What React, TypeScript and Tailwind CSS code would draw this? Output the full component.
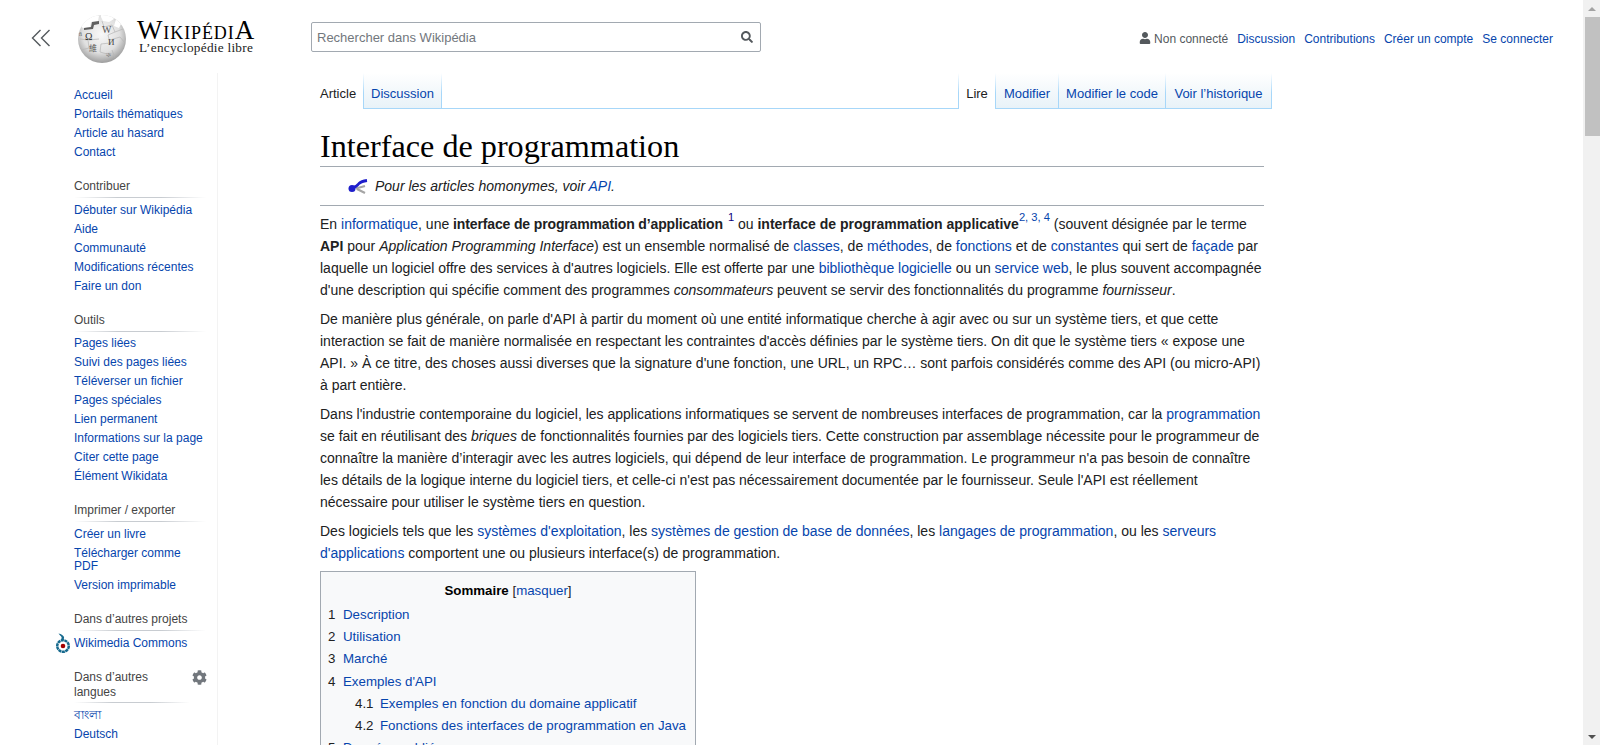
import React from "react";
import { FaCog, FaSearch, FaUser } from "react-icons/fa";

const A = ({ children }: { children: React.ReactNode }) => (
  <a className="text-[#0645ad]">{children}</a>
);

function Globe() {
  return (
    <svg width="52" height="50" viewBox="0 0 52 50" className="block">
      <defs>
        <radialGradient id="g" cx="48%" cy="40%" r="62%">
          <stop offset="0%" stopColor="#f8f8f8" />
          <stop offset="62%" stopColor="#e0e0e0" />
          <stop offset="100%" stopColor="#979797" />
        </radialGradient>
        <clipPath id="c"><circle cx="26" cy="26" r="24" /></clipPath>
      </defs>
      <circle cx="26" cy="26" r="24" fill="url(#g)" />
      <g clipPath="url(#c)">
        <path d="M10 3l8-3 5 3-1 5-7 1-1 5-7 1-3-2z" fill="#fff" />
        <path d="M25 0l9 1 4 5-5 3-6-1-2-4zM40 6l5 5-2 4-5-2z" fill="#fff" />
        <path d="M8 15l7-1 1-5 7-1 0 3-5 1-1 4-9 1z" fill="#5f5f5f" />
        <path d="M26 8l2 6 8-2 3 7-7 3 2 8-9 1-1 8 7 2M4 26l8 1 1 8-8 2M13 27l10-1M34 27l10-3 5 6M36 37l3 8M39 19l8-3" fill="none" stroke="#b4b4b4" strokeWidth="0.7" />
      </g>
      <text x="9" y="27" fontSize="10" fill="#333" fontFamily="Liberation Serif, serif">Ω</text>
      <text x="26" y="20" fontSize="10" fill="#555" fontFamily="Liberation Serif, serif">W</text>
      <text x="32" y="32" fontSize="9" fill="#444" fontFamily="Liberation Serif, serif">И</text>
      <text x="13" y="38" fontSize="8" fill="#555" fontFamily="Noto Sans CJK SC, sans-serif">維</text>
      <text x="3" y="23" fontSize="6" fill="#666" fontFamily="Liberation Serif, serif">ñ</text>
      <text x="30" y="44" fontSize="7" fill="#777" fontFamily="Liberation Serif, serif">ক</text>
    </svg>
  );
}

function Logo() {
  return (
    <div className="flex items-start">
      <div className="ml-[76px] mt-[13px]"><Globe /></div>
      <div className="ml-[8px] mt-[16px] w-[120px] font-['Liberation_Serif',serif] text-black text-center">
        <div className="h-[24px] leading-[28px] whitespace-nowrap text-[18px] tracking-[0.9px]">
          <span className="text-[27px]">W</span>IKIPÉDI<span className="text-[27px]">A</span>
        </div>
        <div className="text-[13.3px] leading-[16px] tracking-[0.25px] whitespace-nowrap text-[#222]">L’encyclopédie libre</div>
      </div>
    </div>
  );
}

const divider = "h-px bg-[linear-gradient(to_right,rgba(200,204,209,0),#c8ccd1_33%,#c8ccd1_66%,rgba(200,204,209,0))]";
const item = "text-[12px] leading-[15px] py-[2px] text-[#0645ad]";

function Section({ title, items, className, listClass = "pt-[3px]" }: { title?: React.ReactNode; items: React.ReactNode[]; className: string; listClass?: string }) {
  return (
    <div className={className}>
      {title && (
        <>
          <div className="text-[12px] leading-[15px] pt-[1px] pb-[3px] text-[#444]">{title}</div>
          <div className={divider + " w-[132px]"} />
        </>
      )}
      <ul className={title ? listClass : ""}>
        {items.map((t, i) => (
          <li key={i} className={item}>{t}</li>
        ))}
      </ul>
    </div>
  );
}

function Commons() {
  return (
    <svg width="16" height="22" viewBox="0 0 16 22" className="absolute left-[-19px] top-[-4px]">
      <circle cx="8" cy="14" r="5.800" fill="none" stroke="#176a8e" strokeWidth="2.500" strokeDasharray="3 0.5" />
      <path d="M3.500 1.500c3 .5 5 2 5.500 3.500.4 1.300-.6 2.500-.6 3.500L6 8.500C6 7 7 6 6.500 5 6 4 4.500 3 3.500 1.500z" fill="#176a8e" />
      <circle cx="8" cy="14" r="2.300" fill="#a40000" />
    </svg>
  );
}

function Sidebar() {
  return (
    <nav className="w-[218px] shrink-0 h-[672px] pl-[74px] border-r border-[#f3f3f3] overflow-hidden">
      <Section className="mt-[13px]" items={["Accueil", "Portails thématiques", "Article au hasard", "Contact"]} />
      <Section className="mt-[16px]" title="Contribuer" items={["Débuter sur Wikipédia", "Aide", "Communauté", "Modifications récentes", "Faire un don"]} />
      <Section className="mt-[16px]" title="Outils" listClass="pt-[2px]" items={["Pages liées", "Suivi des pages liées", "Téléverser un fichier", "Pages spéciales", "Lien permanent", "Informations sur la page", "Citer cette page", "Élément Wikidata"]} />
      <Section className="mt-[16px]" title="Imprimer / exporter" items={["Créer un livre", <span key="t" className="block w-[120px] leading-[13px] pt-[1px] pb-[1px]">Télécharger comme PDF</span>, "Version imprimable"]} />
      <Section className="mt-[16px]" title="Dans d’autres projets" items={[<span key="c" className="relative block"><Commons />Wikimedia Commons</span>]} />
      <div className="mt-[17px] relative">
        <div className="text-[12px] leading-[14.5px] w-[95px] pb-[3px] text-[#444]">Dans d’autres langues</div>
        <FaCog className="absolute left-[118px] top-[0px] text-[15px] text-[#72777d]" />
        <div className={divider + " w-[116px]"} />
        <ul className="pt-[2px]">
          <li className={item + " pb-[3px] font-['Noto_Sans','DejaVu_Sans',sans-serif]"}>বাংলা</li>
          <li className={item}>Deutsch</li>
        </ul>
      </div>
    </nav>
  );
}

const tabBg = "bg-[linear-gradient(to_top,#e8f2f8,#ffffff)]";
const sep = "w-px h-[36px] shrink-0 bg-[linear-gradient(to_bottom,#ffffff,#a7d7f9_55%,#a7d7f9)]";

function Tab({ label, width, selected }: { label: string; width: string; selected?: boolean }) {
  return (
    <>
      <div
        className={
          "h-[36px] pt-[6px] flex items-center justify-center text-[13px] whitespace-nowrap " + width + " " +
          (selected ? "bg-white text-[#202122]" : "text-[#0645ad] border-b border-[#a7d7f9] " + tabBg)
        }
      >
        {label}
      </div>
      <div className={sep} />
    </>
  );
}

function Tabs() {
  return (
    <div className="flex h-[36px] w-[952px]">
      <div className="h-[36px] pt-[6px] flex items-center text-[13px] text-[#202122] w-[43px] whitespace-nowrap">Article</div>
      <div className={sep} />
      <Tab label="Discussion" width="w-[77px]" />
      <div className="flex-1 border-b border-[#a7d7f9]" />
      <div className={sep} />
      <Tab label="Lire" width="w-[36px]" selected />
      <Tab label="Modifier" width="w-[62px]" />
      <Tab label="Modifier le code" width="w-[106px]" />
      <Tab label="Voir l’historique" width="w-[105px]" />
    </div>
  );
}

function Disambig() {
  return (
    <svg width="20" height="15" viewBox="0 0 20 15" className="block">
      <path d="M8 9.500L17 7M9 10L17 14" stroke="#a5a5a5" strokeWidth="2.200" fill="none" />
      <path d="M4 9C7 8.500 9 7 11 4.500 13 2.500 15 2 19 1.500" stroke="#1e1ecb" strokeWidth="2.800" fill="none" />
      <circle cx="4" cy="9.500" r="3.500" fill="#1e1ecb" />
    </svg>
  );
}

const P = ({ children, className = "" }: { children: React.ReactNode; className?: string }) => (
  <p className={"whitespace-nowrap text-[14px] leading-[22px] " + className}>{children}</p>
);

const Sup = ({ children, className = "" }: { children: React.ReactNode; className?: string }) => (
  <sup className={"text-[11.2px] leading-none top-0 align-[8px] " + className}>{children}</sup>
);

function Toc() {
  const row = "text-[13.3px] leading-[22.2px] whitespace-nowrap";
  return (
    <div className="mt-[7px] w-[376px] border border-[#a2a9b1] bg-[#f8f9fa] pt-[9px] px-[7px]">
      <div className="text-center text-[13.3px] leading-[20px] mb-[3px]">
        <b className="font-bold text-black">Sommaire</b> <span>[</span><A>masquer</A><span>]</span>
      </div>
      {[["1", "Description"], ["2", "Utilisation"], ["3", "Marché"], ["4", "Exemples d'API"]].map(([n, t]) => (
        <div key={n} className={row}>
          <span className="inline-block w-[15px] text-[#202122]">{n}</span><A>{t}</A>
        </div>
      ))}
      {[["4.1", "Exemples en fonction du domaine applicatif"], ["4.2", "Fonctions des interfaces de programmation en Java"]].map(([n, t]) => (
        <div key={n} className={row + " pl-[27px]"}>
          <span className="inline-block w-[25px] text-[#202122]">{n}</span><A>{t}</A>
        </div>
      ))}
      <div className={row}>
        <span className="inline-block w-[15px] text-[#202122]">5</span><A>Données publiées</A>
      </div>
    </div>
  );
}

function Content() {
  return (
    <main className="pl-[102px] h-[672px] overflow-hidden text-[#202122]">
      <Tabs />
      <h1 className="mt-[17px] w-[944px] border-b border-[#a2a9b1] font-['Liberation_Serif',serif] text-[32.2px] leading-[40px] h-[41px] text-black whitespace-nowrap">
        Interface de programmation
      </h1>
      <div className="w-[944px] h-[39px] border-b border-[#a2a9b1] flex items-center pl-[28px] text-[14px] whitespace-nowrap">
        <Disambig />
        <i className="ml-[7px] pt-[1px]">Pour les articles homonymes, voir <A>API</A>.</i>
      </div>
      <div className="w-[944px] pt-[6px]">
        <P>
          En <A>informatique</A>, une <b className="tracking-[-0.14px]">interface de programmation d’application</b><Sup className="text-[#0b0080] ml-[5px]">1</Sup> ou <b>interface de programmation applicative</b><Sup className="text-[#0645ad]">2, 3, 4</Sup> (souvent désignée par le terme<br />
          <b>API</b> pour <i>Application Programming Interface</i>) est un ensemble normalisé de <A>classes</A>, de <A>méthodes</A>, de <A>fonctions</A> et de <A>constantes</A> qui sert de <A>façade</A> par<br />
          laquelle un logiciel offre des services à d'autres logiciels. Elle est offerte par une <A>bibliothèque logicielle</A> ou un <A>service web</A>, le plus souvent accompagnée<br />
          d'une description qui spécifie comment des programmes <i>consommateurs</i> peuvent se servir des fonctionnalités du programme <i>fournisseur</i>.
        </P>
        <P className="mt-[7px]">
          De manière plus générale, on parle d'API à partir du moment où une entité informatique cherche à agir avec ou sur un système tiers, et que cette<br />
          interaction se fait de manière normalisée en respectant les contraintes d'accès définies par le système tiers. On dit que le système tiers « expose une<br />
          API. » À ce titre, des choses aussi diverses que la signature d'une fonction, une URL, un RPC… sont parfois considérés comme des API (ou micro-API)<br />
          à part entière.
        </P>
        <P className="mt-[6.5px]">
          Dans l'industrie contemporaine du logiciel, les applications informatiques se servent de nombreuses interfaces de programmation, car la <A>programmation</A><br />
          se fait en réutilisant des <i>briques</i> de fonctionnalités fournies par des logiciels tiers. Cette construction par assemblage nécessite pour le programmeur de<br />
          connaître la manière d’interagir avec les autres logiciels, qui dépend de leur interface de programmation. Le programmeur n'a pas besoin de connaître<br />
          les détails de la logique interne du logiciel tiers, et celle-ci n'est pas nécessairement documentée par le fournisseur. Seule l'API est réellement<br />
          nécessaire pour utiliser le système tiers en question.
        </P>
        <P className="mt-[7.5px]">
          Des logiciels tels que les <A>systèmes d'exploitation</A>, les <A>systèmes de gestion de base de données</A>, les <A>langages de programmation</A>, ou les <A>serveurs</A><br />
          <A>d'applications</A> comportent une ou plusieurs interface(s) de programmation.
        </P>
        <Toc />
      </div>
    </main>
  );
}

function Header() {
  return (
    <header className="h-[73px] flex items-start relative">
      <svg width="20" height="18" viewBox="0 0 20 18" className="ml-[31px] mt-[29px] shrink-0" fill="none" stroke="#54595d" strokeWidth="1.400">
        <path d="M9.500 1L1.500 9l8 8M18.500 1l-8 8 8 8" />
      </svg>
      <div className="-ml-[51px] w-[311px] shrink-0"><Logo /></div>
      <div className="mt-[22px] w-[450px] h-[30px] shrink-0 border border-[#a2a9b1] rounded-[2px] bg-white flex items-center justify-between pl-[5px] pr-[7px] text-[13px] text-[#72777d]">
        <span className="pt-[1px]">Rechercher dans Wikipédia</span>
        <FaSearch className="text-[12px] text-[#54595d]" />
      </div>
      <div className="ml-auto mt-[31px] mr-[30px] flex items-center h-[15px] text-[12px] whitespace-nowrap">
        <FaUser className="text-[12px] text-[#54595d] mr-[3px] -mt-[1px]" />
        <span className="text-[#54595d]">Non connecté</span>
        <span className="ml-[9px] text-[#0645ad]">Discussion</span>
        <span className="ml-[9px] text-[#0645ad]">Contributions</span>
        <span className="ml-[9px] text-[#0645ad]">Créer un compte</span>
        <span className="ml-[9px] text-[#0645ad]">Se connecter</span>
      </div>
    </header>
  );
}

function Scrollbar() {
  return (
    <div className="w-[17px] h-[745px] shrink-0 bg-[#f1f1f1] flex flex-col items-center justify-between">
      <div className="flex flex-col w-full items-center">
        <div className="h-[17px] flex items-center justify-center">
          <div className="w-0 h-0 border-x-[4px] border-x-transparent border-b-[4px] border-b-[#a3a3a3]" />
        </div>
        <div className="h-[119px] w-[15px] ml-[2px] bg-[#c1c1c1]" />
      </div>
      <div className="h-[17px] flex items-center justify-center">
        <div className="w-0 h-0 border-x-[4px] border-x-transparent border-t-[4px] border-t-[#505050]" />
      </div>
    </div>
  );
}

export default function App() {
  return (
    <div className="w-[1600px] h-[745px] overflow-hidden flex bg-white font-['Liberation_Sans',Arial,sans-serif]">
      <div className="flex-1 min-w-0">
        <Header />
        <div className="flex">
          <Sidebar />
          <Content />
        </div>
      </div>
      <Scrollbar />
    </div>
  );
}
